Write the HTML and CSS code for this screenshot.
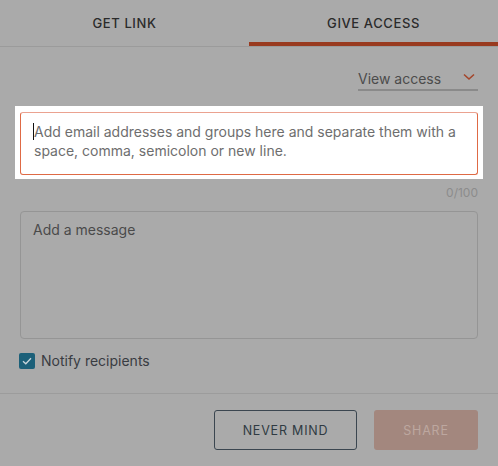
FILE: index.html
```html
<!DOCTYPE html>
<html lang="en">
<head>
    <meta charset="UTF-8">
    <meta name="viewport" content="width=device-width, initial-scale=1.0">
    <title>Share</title>
    <link rel="stylesheet" href="styles.css">
</head>
<body>
<main class="dialog">
    <nav class="tabs">
        <div class="tab">GET LINK</div>
        <div class="tab active">GIVE ACCESS</div>
    </nav>
    <section class="content">
        <div class="access-row">
            <div class="select">
                <span>View access</span>
                <svg class="chevron" width="12" height="8" viewBox="0 0 12 8">
                    <path d="M1 1.5 L6 6 L11 1.5" fill="none" stroke="#a4462b" stroke-width="1.6"/>
                </svg>
            </div>
        </div>
        <div class="spotlight">
            <div class="emails"><span class="caret"></span>Add email addresses and groups here and separate them with a space, comma, semicolon or new line.</div>
        </div>
        <div class="counter">0/100</div>
        <div class="message">Add a message</div>
        <label class="notify">
            <span class="checkbox">
                <svg width="10" height="8" viewBox="0 0 10 8">
                    <path d="M1 4.2 L3.8 6.8 L9 1.2" fill="none" stroke="#c9d6dc" stroke-width="1.3"/>
                </svg>
            </span>
            Notify recipients
        </label>
    </section>
    <footer class="actions">
        <button class="btn btn-outline">NEVER MIND</button>
        <button class="btn btn-share">SHARE</button>
    </footer>
</main>
</body>
</html>
```

FILE: styles.css
```css
body {
    margin: 0;
    background: #aaaaaa;
    font-family: Inter, "Noto Sans", sans-serif;
    color: #2e2e2e;
}
.tabs {
    display: grid;
    grid-template-columns: 249px 1fr;
    border-bottom: 1px solid #9b9b9b;
}
.tab {
    height: 46px;
    display: flex;
    align-items: center;
    justify-content: center;
    font-size: 13px;
    font-weight: 500;
    letter-spacing: 0.6px;
    color: #2b2b2b;
}
.tab.active {
    box-shadow: inset 0 -4px 0 #993a1f;
}
.content {
    padding: 0 20px;
}
.access-row {
    display: flex;
    justify-content: flex-end;
    margin-top: 20px;
}
.select {
    width: 120px;
    height: 22px;
    display: flex;
    align-items: center;
    justify-content: space-between;
    border-bottom: 2px solid #8a8a8a;
    font-size: 14px;
    color: #4c4c4c;
}
.chevron {
    margin-right: 3px;
    margin-top: -3px;
}
.spotlight {
    margin: 15px -5px 0;
    padding: 6px 5px 4px;
    background: #fff;
}
.emails {
    height: 63px;
    box-sizing: border-box;
    border: 1px solid #df6a45;
    border-top-color: #eba290;
    border-radius: 3px;
    padding: 9px 13px 0 13px;
    font-size: 14px;
    line-height: 19px;
    color: #6e6e6e;
}
.caret {
    display: inline-block;
    width: 1px;
    height: 17px;
    background: #111;
    vertical-align: -3px;
    margin-left: -1px;
}
.counter {
    text-align: right;
    font-size: 12px;
    color: #8c8c8c;
    margin-top: 6px;
    height: 16px;
}
.message {
    margin-top: 10px;
    height: 128px;
    box-sizing: border-box;
    border: 1px solid #959595;
    border-radius: 4px;
    padding: 9px 12px;
    font-size: 14px;
    color: #4a4a4a;
}
.notify {
    display: flex;
    align-items: center;
    gap: 6px;
    margin: 13px 0 0 -1px;
    font-size: 14px;
    color: #393c42;
}
.checkbox {
    width: 16px;
    height: 16px;
    border-radius: 2px;
    background: #1c6079;
    display: flex;
    align-items: center;
    justify-content: center;
}
.actions {
    margin-top: 24px;
    border-top: 1px solid #9c9c9c;
    padding: 16px 20px 0;
    display: flex;
    justify-content: flex-end;
    gap: 17px;
}
.btn {
    height: 40px;
    border-radius: 3px;
    font-family: Inter, "Noto Sans", sans-serif;
    font-size: 12.5px;
    font-weight: 400;
    letter-spacing: 0.8px;
}
.btn-outline {
    width: 143px;
    background: transparent;
    border: 1px solid #3b4650;
    color: #2f3a42;
}
.btn-share {
    width: 104px;
    background: #a3877e;
    border: none;
    color: #bda7a0;
}
```
